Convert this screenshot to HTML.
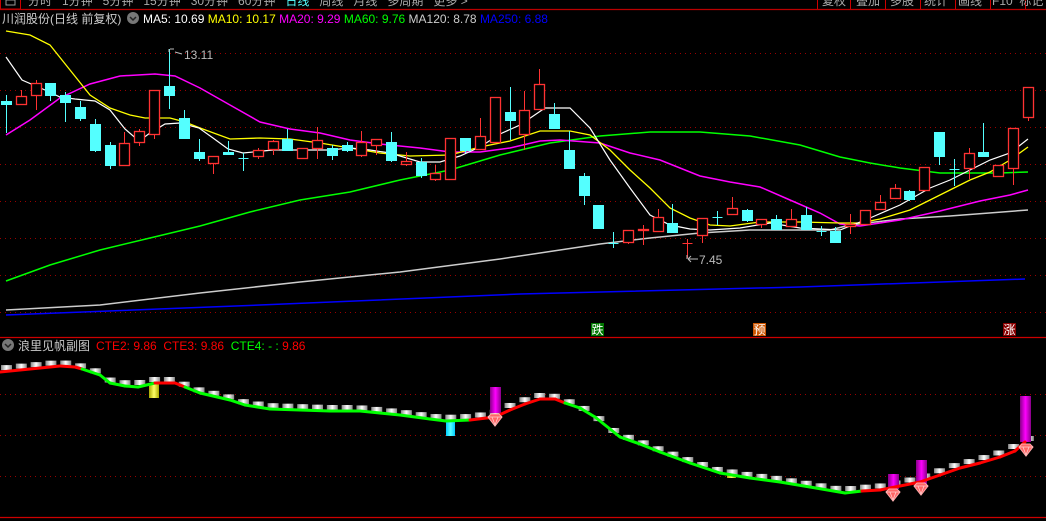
<!DOCTYPE html>
<html><head><meta charset="utf-8">
<style>
html,body{margin:0;padding:0;background:#000;width:1046px;height:521px;overflow:hidden}
svg{display:block}
text{font-family:"Liberation Sans","Noto Sans CJK SC",sans-serif}
</style></head><body>
<svg id="s" width="1046" height="521" xmlns="http://www.w3.org/2000/svg">
<rect width="1046" height="521" fill="#000"/>
<rect x="0.5" y="-2" width="20" height="11" fill="none" stroke="#c00" stroke-width="1"/>
<rect x="6" y="0" width="9" height="5" fill="none" stroke="#999"/>
<line x1="0" y1="9.5" x2="1046" y2="9.5" stroke="#b00" stroke-width="1.2"/>
<text x="28" y="5" font-size="12" fill="#aaa" xml:space="preserve">分时   1分钟   5分钟   15分钟   30分钟   60分钟   <tspan fill="#5ff">日线</tspan>   周线   月线   多周期   更多 &gt;</text>
<g stroke="#c00" stroke-width="1">
<line x1="817.5" y1="0" x2="817.5" y2="9"/><line x1="850.5" y1="0" x2="850.5" y2="9"/><line x1="885.5" y1="0" x2="885.5" y2="9"/><line x1="920.5" y1="0" x2="920.5" y2="9"/><line x1="955.5" y1="0" x2="955.5" y2="9"/><line x1="990.5" y1="0" x2="990.5" y2="9"/><line x1="1025.5" y1="0" x2="1025.5" y2="9"/>
</g>
<text x="822" y="5" font-size="12" fill="#aaa" xml:space="preserve">复权   叠加   多股   统计   画线   F10  标记</text>
<text x="2" y="23" font-size="12" fill="#ccc">川润股份(日线 前复权)</text>
<circle cx="133" cy="18" r="6" fill="#777"/>
<path d="M130 17 L133 20 L136 17" stroke="#222" stroke-width="1.5" fill="none"/>
<text x="143" y="23" font-size="12" xml:space="preserve"><tspan fill="#fff">MA5: 10.69 </tspan><tspan fill="#ff0">MA10: 10.17 </tspan><tspan fill="#f0f">MA20: 9.29 </tspan><tspan fill="#0f0">MA60: 9.76 </tspan><tspan fill="#ccc">MA120: 8.78 </tspan><tspan fill="#00f">MA250: 6.88</tspan></text>
<g id="grid" stroke="#900" stroke-width="1" stroke-dasharray="1,4"></g>
<line x1="0" y1="337.5" x2="1046" y2="337.5" stroke="#c00" stroke-width="1.3"/>
<line x1="0" y1="517.5" x2="1046" y2="517.5" stroke="#c00" stroke-width="1.3"/>
<g id="ma" fill="none" stroke-width="1.2"></g>
<g id="cd"></g>
<text x="184" y="59" font-size="12" fill="#bbb">13.11</text>
<path d="M170 49 L174 49 M169 49 L169 52 M175 52 L182 54" stroke="#bbb" fill="none"/>
<path d="M688 259 L698 259 M688 259 L691 256 M688 259 L691 262 M687 255 L687 259" stroke="#bbb" fill="none"/>
<text x="699" y="264" font-size="12" fill="#bbb">7.45</text>
<rect x="591" y="323" width="13" height="13" fill="#070"/><text x="591.5" y="334" font-size="12" fill="#fff">跌</text>
<rect x="753" y="323" width="13" height="13" fill="#c50"/><text x="753.5" y="334" font-size="12" fill="#fff">预</text>
<rect x="1003" y="323" width="13" height="13" fill="#800"/><text x="1003.5" y="334" font-size="12" fill="#fff">涨</text>
<circle cx="8" cy="345" r="6" fill="#777"/>
<path d="M5 344 L8 347 L11 344" stroke="#222" stroke-width="1.5" fill="none"/>
<text x="18" y="350" font-size="12" fill="#ccc">浪里见帆副图</text>
<text x="96" y="350" font-size="12" xml:space="preserve"><tspan fill="#f00">CTE2: 9.86  CTE3: 9.86  </tspan><tspan fill="#0f0">CTE4: - : </tspan><tspan fill="#f00">9.86</tspan></text>
<g id="sub"></g>
</svg>
<script>
var NS="http://www.w3.org/2000/svg";
function el(p,t,a){var e=document.createElementNS(NS,t);for(var k in a)e.setAttribute(k,a[k]);p.appendChild(e);return e;}
var grid=document.getElementById('grid');
[53,90,127,164,201,238,275,312,394,435,476].forEach(function(y){el(grid,'line',{x1:0,y1:y+.5,x2:1046,y2:y+.5});});
var ma=document.getElementById('ma');
function pl(pts,c,w){el(ma,'polyline',{points:pts.map(function(p){return p.join(',')}).join(' '),stroke:c,'stroke-width':w||1.2});}
pl([[6,315],[260,305],[520,294],[800,287],[1025,279]],'#00f',1.5);
pl([[6,310],[100,305],[200,293],[300,282],[400,272],[500,259],[560,250],[600,244],[650,238],[700,233],[750,230],[830,230],[850,225],[900,219],[950,216],[1028,210]],'#ccc',1.5);
pl([[6,281],[50,265],[100,250],[150,238],[200,226],[250,212],[300,200],[350,192],[400,180],[450,170],[500,155],[550,143],[600,136],[650,132],[700,132],[750,136],[800,145],[840,157],[870,163],[900,168],[940,173],[1000,173],[1028,172]],'#0f0',1.5);
pl([[6,135],[30,120],[60,98],[90,84],[120,76],[155,74],[175,76],[200,88],[230,105],[260,122],[290,129],[320,133],[350,140],[380,144],[420,148],[450,152],[480,152],[510,148],[540,141],[560,140],[600,143],[630,153],[660,160],[700,176],[730,182],[760,187],[790,200],[820,213],[840,224],[860,226],[900,220],[940,211],[980,201],[1010,195],[1028,190]],'#f0f',1.5);
pl([[6,31],[30,35],[50,45],[70,70],[90,95],[110,108],[130,115],[145,118],[170,118],[185,122],[200,128],[230,139],[260,138],[290,139],[320,143],[350,148],[380,153],[410,156],[450,155],[480,147],[510,141],[540,131],[570,131],[590,135],[610,150],[630,170],[650,188],[670,208],[690,218],[710,225],[730,226],[760,222],[800,222],[840,223],[860,223],[880,219],[910,210],[940,195],[970,180],[990,172],[1010,160],[1028,147]],'#ff0',1.3);
pl([[6,57],[22,80],[45,90],[60,97],[75,99],[95,101],[110,110],[125,129],[139,141],[150,133],[165,124],[180,123],[199,128],[213,138],[228,149],[243,153],[273,150],[330,150],[350,148],[370,150],[390,153],[420,162],[440,162],[460,156],[480,147],[500,134],[520,125],[545,108],[570,108],[590,128],[610,160],[630,188],[650,215],[670,225],[690,229],[710,230],[740,228],[770,223],[800,228],[840,230],[870,218],[900,205],[930,188],[950,180],[970,170],[990,160],[1010,153],[1028,139]],'#fff',1.2);
var C=[['c',101,105,95,133],['r',96,105,90,105],['r',83,96,80,110],['c',83,96,83,101],['c',95,103,92,122],['c',107,119,101,121],['c',124,151,119,152],['c',145,166,142,169],['r',143,166,132,166],['r',131,143,129,146],
['r',90,135,90,139],['c',86,96,49,109],['c',118,139,110,139],['c',152,159,139,161],['r',156,164,156,174],['c',152,155,141,155],['c',158,158,153,171],['r',150,157,148,159],['r',141,150,140,155],['c',139,151,129,151],
['r',148,159,148,159],['r',140,149,127,159],['c',148,156,145,160],['c',145,151,142,152],['r',142,156,131,157],['r',139,146,139,155],['c',142,161,132,162],['r',161,165,152,166],['c',162,176,158,178],['r',173,180,165,181],
['r',138,180,138,180],['c',138,151,138,153],['r',136,150,118,150],['r',97,143,97,143],['c',112,121,87,140],['r',110,135,91,150],['r',84,110,69,110],['c',114,129,103,129],['c',150,169,131,169],['c',176,196,173,205],
['c',205,229,205,229],['c',243,243,232,248],['r',230,243,230,244],['r',229,231,225,245],['r',217,232,209,232],['c',223,233,204,233],['r',243,243,239,258],['r',218,236,218,243],['c',217,217,211,225],['r',208,215,197,215],
['c',210,221,209,222],['r',219,225,219,228],['c',219,230,215,230],['r',219,227,209,227],['c',215,230,207,230],['c',231,231,226,236],['c',231,243,227,243],['r',224,227,214,234],['r',210,225,210,225],['r',202,210,195,210],
['r',188,199,184,199],['c',191,200,190,201],['r',167,191,167,191],['c',132,157,132,165],['c',169,169,159,186],['r',153,169,148,179],['c',152,157,123,157],['r',165,177,165,177],['r',128,169,128,185],['r',87,118,87,121]];
var cd=document.getElementById('cd');
var SP=14.81;
C.forEach(function(c,i){
 var x=Math.round(6+i*SP)+.5, col=c[0]=='c'?'#54ffff':'#ff3232';
 el(cd,'line',{x1:x,y1:c[3],x2:x,y2:c[4],stroke:col,'stroke-width':1});
 var h=c[2]-c[1];
 if(h<1.5){el(cd,'line',{x1:x-5,y1:c[1]+.5,x2:x+5,y2:c[1]+.5,stroke:col});}
 else if(c[0]=='c'){el(cd,'rect',{x:x-5.5,y:c[1],width:11,height:h,fill:col});}
 else{el(cd,'rect',{x:x-5,y:c[1]+.5,width:10,height:h-1,fill:'#000',stroke:col,'stroke-width':1.3});}
});
var L=[[0,372,'r'],[20,370,'r'],[40,368,'r'],[60,366,'r'],[75,367,'r'],[82,369,'g'],[100,375,'g'],[110,383,'g'],[125,386,'g'],[138,387,'g'],[155,383,'r'],[175,383,'r'],[185,387,'g'],[200,393,'g'],[230,400,'g'],[245,405,'g'],[270,409,'g'],[300,410,'g'],[330,411,'g'],[360,411,'g'],[380,413,'g'],[400,415,'g'],[430,419,'g'],[446,421,'g'],[470,420,'r'],[495,417,'r'],[510,410,'r'],[525,404,'r'],[540,399,'r'],[555,399,'r'],[565,403,'g'],[580,408,'g'],[595,417,'g'],[620,437,'g'],[640,444,'g'],[660,452,'g'],[690,463,'g'],[720,473,'g'],[750,478,'g'],[780,482,'g'],[810,487,'g'],[845,493,'g'],[862,491,'r'],[880,490,'r'],[900,486,'r'],[920,482,'r'],[940,475,'r'],[960,468,'r'],[980,463,'r'],[1000,457,'r'],[1015,451,'r'],[1025,442,'r']];
function ly(x){for(var i=0;i<L.length-1;i++){if(x>=L[i][0]&&x<=L[i+1][0]){var t=(x-L[i][0])/(L[i+1][0]-L[i][0]);return L[i][1]+t*(L[i+1][1]-L[i][1]);}}return L[L.length-1][1];}
var sub=document.getElementById('sub');
var defs=el(sub,'defs',{});
var g1=el(defs,'linearGradient',{id:'wb',x1:0,y1:0,x2:1,y2:0});
el(g1,'stop',{offset:'0','stop-color':'#888'});el(g1,'stop',{offset:'0.5','stop-color':'#fff'});el(g1,'stop',{offset:'1','stop-color':'#888'});
var g2=el(defs,'linearGradient',{id:'mg',x1:0,y1:0,x2:1,y2:0});
el(g2,'stop',{offset:'0','stop-color':'#808'});el(g2,'stop',{offset:'0.5','stop-color':'#f0f'});el(g2,'stop',{offset:'1','stop-color':'#808'});
var g3=el(defs,'linearGradient',{id:'yg',x1:0,y1:0,x2:1,y2:0});
el(g3,'stop',{offset:'0','stop-color':'#aa0'});el(g3,'stop',{offset:'0.5','stop-color':'#ff6'});el(g3,'stop',{offset:'1','stop-color':'#aa0'});
var g4=el(defs,'linearGradient',{id:'cg',x1:0,y1:0,x2:1,y2:0});
el(g4,'stop',{offset:'0','stop-color':'#0cf'});el(g4,'stop',{offset:'0.5','stop-color':'#5ff'});el(g4,'stop',{offset:'1','stop-color':'#0cf'});
for(var i=0;i<70;i++){var x=6+i*SP;var y=ly(x+3);el(sub,'rect',{x:x-5,y:y-6,width:11,height:5,fill:'url(#wb)'});}
el(sub,'rect',{x:149,y:383,width:10,height:15,fill:'url(#yg)'});
el(sub,'rect',{x:446,y:421,width:9,height:15,fill:'url(#cg)'});
el(sub,'rect',{x:727,y:474,width:9,height:4,fill:'url(#yg)'});
[[490,387,413],[888,474,489],[916,460,486],[1020,396,442]].forEach(function(m){el(sub,'rect',{x:m[0],y:m[1],width:11,height:m[2]-m[1],fill:'url(#mg)'});});
for(var i=0;i<L.length-1;i++){el(sub,'line',{x1:L[i][0],y1:L[i][1],x2:L[i+1][0],y2:L[i+1][1],stroke:L[i][2]=='r'?'#f00':'#0f0','stroke-width':3,'stroke-linecap':'round'});}
[[495,420],[893,495],[921,489],[1026,450]].forEach(function(d){var x=d[0],y=d[1];
 el(sub,'path',{d:'M'+(x-7)+' '+(y-3)+' L'+(x-4)+' '+(y-6)+' L'+(x+4)+' '+(y-6)+' L'+(x+7)+' '+(y-3)+' L'+x+' '+(y+6)+' Z',fill:'#f66',stroke:'#faa','stroke-width':1});
 el(sub,'path',{d:'M'+(x-7)+' '+(y-3)+' L'+(x+7)+' '+(y-3)+' M'+(x-3)+' '+(y-3)+' L'+x+' '+(y+5)+' L'+(x+3)+' '+(y-3),fill:'none',stroke:'#fcc','stroke-width':.8});});
</script>
</body></html>
